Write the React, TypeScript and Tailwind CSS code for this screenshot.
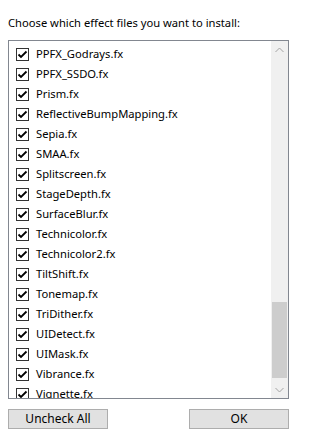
const files = [
  "PPFX_Godrays.fx",
  "PPFX_SSDO.fx",
  "Prism.fx",
  "ReflectiveBumpMapping.fx",
  "Sepia.fx",
  "SMAA.fx",
  "Splitscreen.fx",
  "StageDepth.fx",
  "SurfaceBlur.fx",
  "Technicolor.fx",
  "Technicolor2.fx",
  "TiltShift.fx",
  "Tonemap.fx",
  "TriDither.fx",
  "UIDetect.fx",
  "UIMask.fx",
  "Vibrance.fx",
  "Vignette.fx",
];

function CheckBox() {
  return (
    <div className="w-[13px] h-[13px] border border-[#333333] bg-white flex items-center justify-center flex-shrink-0">
      <svg width="11" height="11" viewBox="0 0 11 11">
        <path d="M1.5 5.5 L4 8 L9.5 2.5" fill="none" stroke="#000" strokeWidth="1.8" />
      </svg>
    </div>
  );
}

export default function App() {
  return (
    <div
      className="w-[298px] h-[437px] bg-white text-[11.2px] text-black overflow-hidden"
      style={{ fontFamily: '"Noto Sans", "Open Sans", sans-serif' }}
    >
      <div className="pt-[15px] pl-[8px] leading-[16px] h-[40px]">
        Choose which effect files you want to install:
      </div>
      <div className="ml-[8px] w-[281px] h-[359px] border border-[#828790] flex overflow-hidden">
        <div className="flex-1 pt-[3px] pl-[7px] overflow-hidden">
          {files.map((f) => (
            <div key={f} className="h-[20px] flex items-center gap-[7px]">
              <CheckBox />
              <span className="leading-[16px] whitespace-nowrap">{f}</span>
            </div>
          ))}
        </div>
        {/* scrollbar */}
        <div className="w-[17px] bg-[#f0f0f0] flex flex-col">
          <div className="h-[17px] flex items-center justify-center">
            <svg width="9" height="6" viewBox="0 0 9 6">
              <path d="M0.5 5 L4.5 1 L8.5 5" fill="none" stroke="#a3a3a3" strokeWidth="1" />
            </svg>
          </div>
          <div className="flex-1" />
          <div className="h-[76px] mx-[1px] mb-[3px] bg-[#cdcdcd]" />
          <div className="h-[17px] flex items-center justify-center">
            <svg width="9" height="6" viewBox="0 0 9 6">
              <path d="M0.5 1 L4.5 5 L8.5 1" fill="none" stroke="#a3a3a3" strokeWidth="1" />
            </svg>
          </div>
        </div>
      </div>
      <div className="mt-[10px] px-[8px] w-[297px] flex justify-between">
        <button className="w-[100px] h-[20px] bg-[#e1e1e1] border border-[#adadad] leading-[16px] text-[12px]">
          Uncheck All
        </button>
        <button className="w-[100px] h-[20px] bg-[#e1e1e1] border border-[#adadad] leading-[16px] text-[12px]">
          OK
        </button>
      </div>
    </div>
  );
}
